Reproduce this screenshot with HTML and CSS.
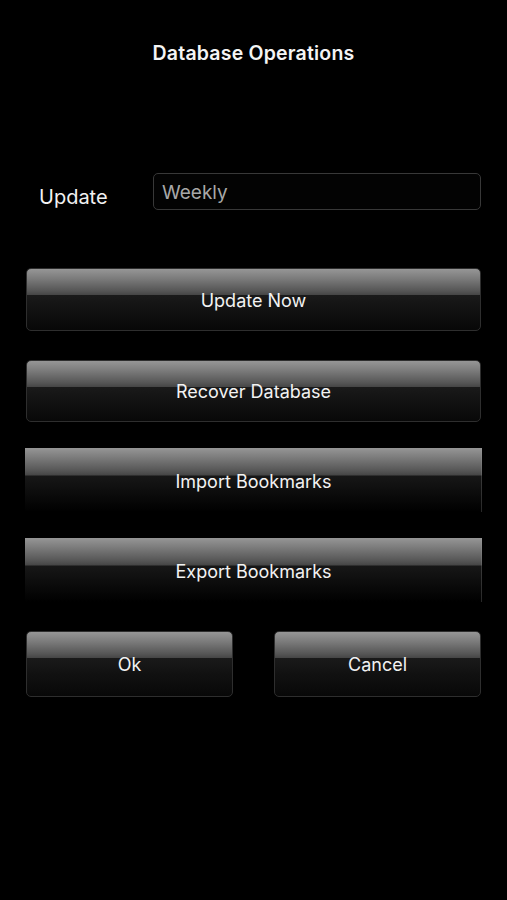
FILE: index.html
```html
<!DOCTYPE html>
<html>
<head>
<meta charset="utf-8">
<link rel="stylesheet" href="styles.css">
</head>
<body>
<div class="screen">
  <h1 class="title">Database Operations</h1>
  <div class="update-row">
    <span class="label">Update</span>
    <div class="field">Weekly</div>
  </div>
  <div class="btn btn-update">Update Now</div>
  <div class="btn btn-recover">Recover Database</div>
  <div class="btn-flat btn-import">Import Bookmarks</div>
  <div class="btn-flat btn-export">Export Bookmarks</div>
  <div class="pair">
    <div class="btn btn-half">Ok</div>
    <div class="btn btn-half">Cancel</div>
  </div>
</div>
</body>
</html>
```

FILE: styles.css
```css
html, body {
  margin: 0;
  padding: 0;
  background: #000;
}
body {
  width: 507px;
  height: 900px;
  overflow: hidden;
  font-family: Inter, "Liberation Sans", sans-serif;
  color: #f2f2f2;
}
.screen {
  padding: 0 26px;
}
.title {
  margin: 0;
  padding-top: 41px;
  height: 24px;
  line-height: 24px;
  text-align: center;
  font-size: 19.5px;
  font-weight: 600;
  color: #f4f4f4;
  letter-spacing: 0.2px;
}
.update-row {
  display: flex;
  align-items: center;
  margin-top: 108px;
  padding-left: 13px;
}
.label {
  width: 114px;
  font-size: 20px;
  color: #f2f2f2;
  padding-top: 10px;
}
.field {
  flex: 1;
  box-sizing: border-box;
  height: 37px;
  border: 1.5px solid #383838;
  border-radius: 5px;
  background: #030303;
  color: #a8a8a8;
  font-size: 19px;
  line-height: 38px;
  padding-left: 8px;
}
.btn {
  box-sizing: border-box;
  display: flex;
  align-items: center;
  justify-content: center;
  height: 63px;
  border: 1px solid #2e2e2e;
  border-radius: 5px;
  background: linear-gradient(to bottom, #969696 0, #7a7a7a 10px, #555 22px, #454545 26px, #1a1a1a 26px, #111 42px, #080808 100%);
  font-size: 18px;
  color: #f2f2f2;
  padding-top: 1px;
}
.btn-update {
  margin-top: 58px;
}
.btn-recover {
  margin-top: 29px;
  height: 62px;
}
.btn-flat {
  display: flex;
  align-items: center;
  justify-content: center;
  height: 64px;
  margin: 0 -1px;
  background: linear-gradient(to bottom, #969696 0, #7a7a7a 10px, #555 23px, #464646 27px, #171717 28px, #0e0e0e 42px, #000 64px);
  box-shadow: inset -1px 0 0 rgba(160,160,160,0.25);
  font-size: 18px;
  color: #f2f2f2;
  padding-top: 2px;
  box-sizing: border-box;
}
.btn-import {
  margin-top: 26px;
}
.btn-export {
  margin-top: 26px;
}
.pair {
  display: flex;
  justify-content: space-between;
  margin-top: 29px;
}
.btn-half {
  width: 207px;
  height: 66px;
}
```
